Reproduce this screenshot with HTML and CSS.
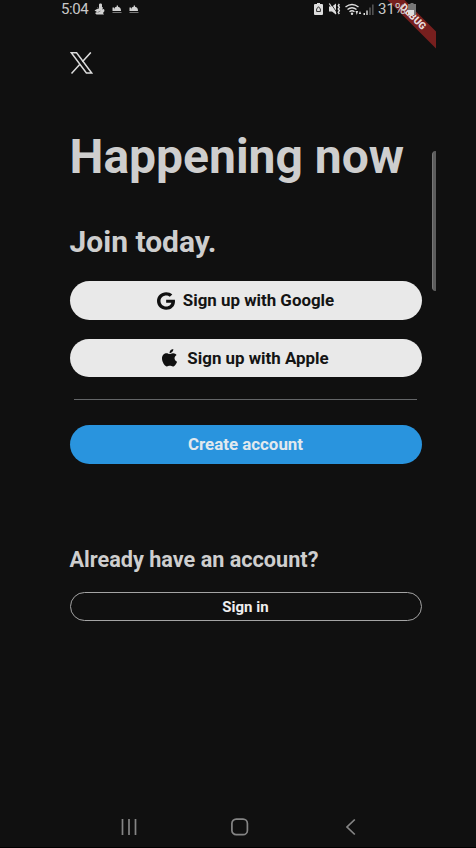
FILE: index.html
```
<!DOCTYPE html>
<html lang="en">
<head>
<meta charset="utf-8">
<title>Happening now</title>
<link rel="stylesheet" href="styles.css">
</head>
<body>
<header class="status">
  <span class="clock">5:04</span>
  <svg class="notices" width="46" height="14" viewBox="0 0 46 14" fill="#d2d2d2">
    <path d="M5 2.500C5 1 8 1 8 2.500V5l1 .5-.7 2L10 7l.5 2-1.500 2 1 1.500H2.500L1 11l2-1-2.500-1.500L3 7l2-.5z"/>
    <path d="M3 5.500l2 1M3.500 10.500l3-1.500" stroke="#777" stroke-width=".8"/>
    <path d="M18.500 5.500H20V8c0-2 1-3 2.700-3.200V3.500h1.300v1.300C26 5 27 6.500 27 9h-8.500z"/>
    <path d="M35.500 5.500H37V8c0-2 1-3 2.700-3.200V3.500H41v1.300c2 .2 3 1.700 3 4.200h-8.500z"/>
    <path d="M18.500 10.500h9M35.500 10.500h9" stroke="#777"/>
  </svg>
  <svg class="signals" width="60" height="14" viewBox="0 0 60 14" fill="#dedede">
    <path d="M3 1h3v1h2a1 1 0 0 1 1 1v9a1 1 0 0 1-1 1H1a1 1 0 0 1-1-1V3a1 1 0 0 1 1-1h2z"/>
    <path d="M2.600 7l1.900-2.300L6.400 7v2.500H2.600z" fill="none" stroke="#333"/>
    <path d="M15 4.500h3l4-3v11l-4-3h-3z"/>
    <path d="M16.500 1l6 9" stroke="#101010" stroke-width=".8"/>
    <path d="M15.300 1.500L22 12" stroke="#dedede" stroke-width="1.200"/>
    <path d="M25.300 2l-1 1.700 1 1.600-1 1.700 1 1.600-1 1.700 1 1.700" fill="none" stroke="#dedede" stroke-width="1.500"/>
    <path d="M31.500 5q6.500-5 13 0M33.500 7.500q4.500-3.500 9 0M35.500 9.700q2.500-2 5 0" fill="none" stroke="#dedede" stroke-width="1.400"/>
    <circle cx="38" cy="11.700" r="1.200"/>
    <path d="M41.500 9h2.600l-1.300 4zM44.800 12l1.200-3 1.200 3z"/>
    <path d="M49.500 11H51v2h-1.500zM52.300 8.500h1.400V13h-1.400z"/>
    <path d="M55.300 5.500h1.400V13h-1.400zM58.200 2.500h1.300V13h-1.300z" fill="#626262"/>
  </svg>
  <span class="percent">31%</span>
  <svg class="battery" width="8" height="14" viewBox="0 0 8 14"><path d="M2.500 1h3v1H8v11H0V2h2.500z" fill="#777"/><path d="M0 8h6v5H0z" fill="#ddd"/></svg>
</header>
<div class="corner"><span class="ribbon"></span><span class="debug">DEBUG</span></div>
<div class="thumb"></div>
<main class="page">
  <svg class="logo" width="23" height="22" viewBox="0 0 23 22" fill="none" stroke="#dcdcdc" stroke-width="1.500">
    <path d="M1.300.8H6.600L21.700 21H16.400z"/>
    <path d="M20.800.4L12.400 9.700M9.900 12.300L1.500 21.500"/>
  </svg>
  <h1 class="title">Happening now</h1>
  <h2 class="join">Join today.</h2>
  <button class="btn google">
    <svg width="18" height="18" viewBox="0 0 488 512" preserveAspectRatio="none"><path d="M488 261.800C488 403.300 391.100 504 248 504 110.800 504 0 393.200 0 256S110.800 8 248 8c66.800 0 123 24.500 166.300 64.900l-67.500 64.900C258.500 52.600 94.300 116.600 94.300 256c0 86.500 69.100 156.600 153.700 156.600 98.200 0 135-70.400 140.800-106.900H248v-85.300h236.100c2.300 12.700 3.900 24.900 3.900 41.400z"/></svg>
    <span class="label">Sign up with Google</span>
  </button>
  <button class="btn apple">
    <svg width="15" height="17.5" viewBox="4 32 376 448" preserveAspectRatio="none"><path d="M318.700 268.700c-.2-36.700 16.400-64.400 50-84.800-18.800-26.900-47.200-41.700-84.700-44.600-35.500-2.800-74.300 20.700-88.500 20.700-15 0-49.400-19.700-76.400-19.700C63.300 141.200 4 184.800 4 273.500q0 39.300 14.400 81.200c12.800 36.700 59 126.700 107.200 125.200 25.200-.6 43-17.900 75.800-17.900 31.800 0 48.300 17.900 76.400 17.900 48.600-.7 90.400-82.500 102.600-119.300-65.200-30.700-61.700-90-61.700-91.900zm-56.600-164.200c27.300-32.400 24.800-61.900 24-72.500-24.100 1.400-52 16.400-67.900 34.900-17.500 19.800-27.800 44.300-25.600 71.900 26.100 2 49.900-11.400 69.500-34.300z"/></svg>
    <span class="label">Sign up with Apple</span>
  </button>
  <hr class="rule">
  <button class="btn create"><span class="label">Create account</span></button>
  <h3 class="already">Already have an account?</h3>
  <button class="btn signin"><span class="label">Sign in</span></button>
</main>
<nav class="nav">
  <svg width="16" height="18" viewBox="0 0 16 18" stroke="#858585" stroke-width="1.700"><path d="M1.500 1v16M8 1v16M14.500 1v16"/></svg>
  <svg width="18" height="18" viewBox="0 0 18 18" fill="none" stroke="#858585" stroke-width="1.700"><rect x=".9" y="1.200" width="15.500" height="15.500" rx="4.300"/></svg>
  <svg width="10" height="18" viewBox="0 0 10 18" fill="none" stroke="#858585" stroke-width="1.700"><path d="M8.800 1.500L1 9 8.800 16.500"/></svg>
</nav>
</body>
</html>
```
FILE: styles.css
```
* { box-sizing: border-box; }
body {
  margin: 0;
  height: 848px;
  display: flex;
  flex-direction: column;
  position: relative;
  overflow: hidden;
  background: #101010;
  border-bottom: 1px solid #000;
  color: #cecece;
  font-family: Roboto, "Liberation Sans", sans-serif;
}
.status {
  position: relative;
  z-index: 1;
  height: 20px;
  padding: 2px 0 0 61px;
  display: flex;
  align-items: flex-start;
}
.clock, .percent {
  font-size: 15px;
  line-height: 15px;
  white-space: nowrap;
  color: #c9c9c9;
}
.clock { width: 27px; letter-spacing: -0.4px; }
.notices { margin-left: 6px; }
.signals { margin-left: 174px; }
.percent { width: 29px; margin-left: 4px; }
.battery { margin-left: 1px; }
.corner {
  position: absolute;
  top: 0;
  right: 40px;
  width: 60px;
  height: 60px;
  overflow: hidden;
}
.ribbon, .debug {
  position: absolute;
  top: 11.5px;
  left: -12.5px;
  width: 100px;
  height: 12px;
  transform: rotate(45deg);
}
.ribbon { background: #771f1e; }
.corner .debug {
  top: 11px;
  left: -13px;
  color: #e8dcdc;
  font-size: 10px;
  font-weight: 900;
  line-height: 12px;
  text-align: center;
}
.thumb {
  position: absolute;
  left: 432px;
  top: 151px;
  width: 4px;
  height: 140px;
  background: #5c5c5c;
  border-left: 1px solid #777;
  border-radius: 4px 0 0 4px;
}
.page {
  flex: 1;
  width: 352px;
  margin-left: 69.5px;
  padding-top: 32px;
  display: flex;
  flex-direction: column;
}
.logo { display: block; }
.title, .join, .already { margin: 0; font-weight: 700; white-space: nowrap; }
.title { margin-top: 55px; font-size: 48px; line-height: 56px; }
.join { margin-top: 39px; font-size: 30px; line-height: 36px; }
.btn {
  width: 352px;
  height: 38.5px;
  padding: 0;
  border: 0;
  border-radius: 20px;
  display: flex;
  align-items: center;
  justify-content: center;
  background: #e9e9e9;
  color: #141414;
  font-family: inherit;
  font-size: 16.9px;
  font-weight: 700;
  white-space: nowrap;
}
.btn svg { fill: #101010; }
.google { margin-top: 21.3px; gap: 8px; }
.google .label, .create .label { margin-top: -1px; }
.apple { margin-top: 19.2px; gap: 10px; }
.rule { width: 343px; height: 1px; margin: 21.5px auto 0; border: 0; background: #646668; }
.create { margin-top: 25.4px; background: #2994de; color: #e1e9ee; }
.already { margin-top: 84px; font-size: 21.65px; line-height: 24px; }
.signin {
  height: 29px;
  margin-top: 20.5px;
  border: 1.5px solid #a4a4a4;
  background: transparent;
  color: #eee;
  font-size: 15px;
}
.nav {
  height: 29px;
  padding: 0 120.5px 0 121px;
  display: grid;
  grid-template-columns: 110px 1fr 10px;
}
```
